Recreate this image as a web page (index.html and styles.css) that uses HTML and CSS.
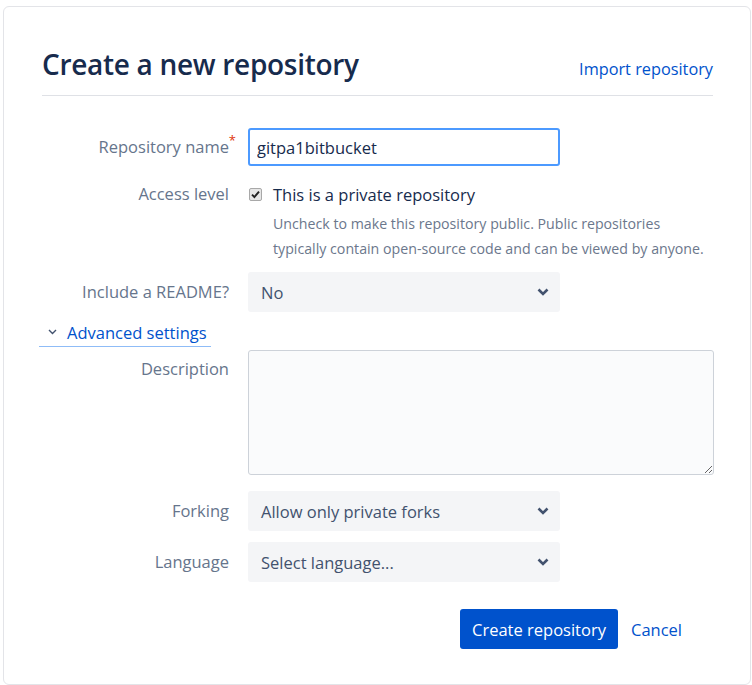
FILE: index.html
```html
<!DOCTYPE html>
<html>
<head>
<meta charset="utf-8">
<link rel="stylesheet" href="styles.css">
</head>
<body>
<div class="card">
  <div class="head">
    <h1 class="title">Create a new repository</h1>
    <a class="link import" href="#">Import repository</a>
  </div>
  <form class="form">
    <div class="row row-name">
      <label class="lbl"><span class="lbl-text">Repository name<span class="req">*</span></span></label>
      <div class="field"><input class="text" type="text" value="gitpa1bitbucket"></div>
    </div>
    <div class="row row-access">
      <label class="lbl">Access level</label>
      <div class="field">
        <div class="check-line">
          <span class="checkbox"><svg width="9" height="9" viewBox="0 0 9 9"><path d="M1 4.6 L3.4 7 L8 1.6" fill="none" stroke="#222" stroke-width="1.9"/></svg></span>
          <span class="check-text">This is a private repository</span>
        </div>
        <p class="help">Uncheck to make this repository public. Public repositories<br>typically contain open-source code and can be viewed by anyone.</p>
      </div>
    </div>
    <div class="row row-readme">
      <label class="lbl">Include a README?</label>
      <div class="field"><div class="select"><span>No</span><svg class="chev" width="12" height="8" viewBox="0 0 12 8"><path d="M1.5 1.5 L6 6 L10.5 1.5" fill="none" stroke="#42526e" stroke-width="2.6"/></svg></div></div>
    </div>
    <div class="advanced">
      <a class="link adv-link" href="#"><svg class="adv-chev" width="9" height="6" viewBox="0 0 9 6"><path d="M1 1 L4.5 4.5 L8 1" fill="none" stroke="#42526e" stroke-width="1.4"/></svg>Advanced settings</a>
    </div>
    <div class="row row-desc">
      <label class="lbl">Description</label>
      <div class="field"><textarea class="textarea"></textarea></div>
    </div>
    <div class="row row-fork">
      <label class="lbl">Forking</label>
      <div class="field"><div class="select"><span>Allow only private forks</span><svg class="chev" width="12" height="8" viewBox="0 0 12 8"><path d="M1.5 1.5 L6 6 L10.5 1.5" fill="none" stroke="#42526e" stroke-width="2.6"/></svg></div></div>
    </div>
    <div class="row row-lang">
      <label class="lbl">Language</label>
      <div class="field"><div class="select"><span>Select language...</span><svg class="chev" width="12" height="8" viewBox="0 0 12 8"><path d="M1.5 1.5 L6 6 L10.5 1.5" fill="none" stroke="#42526e" stroke-width="2.6"/></svg></div></div>
    </div>
    <div class="actions">
      <button class="btn" type="button">Create repository</button>
      <a class="link cancel" href="#">Cancel</a>
    </div>
  </form>
</div>
</body>
</html>
```
FILE: styles.css
```css
* { box-sizing: border-box; }
html, body { margin: 0; padding: 0; background: #fff; }
body {
  font-family: "Open Sans", "Noto Sans", sans-serif;
  color: #172b4d;
  font-size: 16.5px;
}
.card {
  margin: 6px 1px 0 3px;
  height: 679px;
  border: 1px solid #e3e4e8;
  border-radius: 6px;
  padding: 0 37px 0 38px;
}
.head {
  display: flex;
  justify-content: space-between;
  align-items: baseline;
  padding-top: 39px;
  padding-bottom: 13px;
  border-bottom: 1px solid #dfe1e6;
}
.title {
  margin: 0;
  font-size: 28px;
  font-weight: 600;
  line-height: 36px;
  color: #172b4d;
  letter-spacing: -0.3px;
}
.link { color: #0052cc; text-decoration: none; }
.import { font-size: 16.3px; }
.form { padding-top: 32px; }
.row {
  display: grid;
  grid-template-columns: 187px 312px;
  column-gap: 19px;
}
.lbl {
  text-align: right;
  color: #66758c;
  font-size: 16.5px;
}
.lbl-text { position: relative; }
.row-name .lbl { padding-top: 7px; }
.req {
  position: absolute;
  right: -7px;
  top: -1px;
  color: #de350b;
  font-size: 13px;
  line-height: 1;
}
.text {
  width: 312px;
  height: 38px;
  border: 2px solid #4c9aff;
  border-radius: 3px;
  padding: 0 7px;
  font: inherit;
  color: #172b4d;
  outline: none;
}
.row-access { margin-top: 16px; }
.check-line { display: flex; align-items: center; height: 24px; }
.checkbox {
  width: 13px; height: 13px;
  margin-left: 1px;
  border: 1px solid #a8a8a8;
  border-radius: 2px;
  background: #e6e6e6;
  display: flex; align-items: center; justify-content: center;
}
.check-text { margin-left: 11px; color: #172b4d; }
.help {
  margin: 5px 0 0 25px;
  width: 450px;
  font-size: 14.2px;
  line-height: 25px;
  color: #6b778c;
}
.row-access .lbl { line-height: 24px; }
.row-readme { margin-top: 11px; }
.select {
  width: 312px;
  height: 40px;
  background: #f4f5f7;
  border-radius: 3px;
  display: flex;
  align-items: center;
  justify-content: space-between;
  padding: 0 11px 0 13px;
  color: #42526e;
}
.row-readme .lbl, .row-fork .lbl, .row-lang .lbl { line-height: 40px; }
.advanced { margin: 5px 0 0 -3px; }
.adv-link {
  display: inline-flex;
  align-items: center;
  width: 172px;
  height: 29px;
  border-bottom: 1px solid #8fbcf7;
  padding-left: 9px;
}
.adv-chev { margin-right: 10px; }
.row-desc { margin-top: 3px; grid-template-columns: 187px 466px; }
.row-desc .lbl { padding-top: 7px; }
.textarea {
  width: 466px;
  height: 125px;
  border: 1px solid #cdd2d9;
  border-radius: 3px;
  background: #fafbfc;
  display: block;
  font: inherit;
}
.row-fork { margin-top: 16px; }
.row-lang { margin-top: 11px; }
.actions {
  margin-top: 27px;
  display: flex;
  align-items: center;
  padding-left: 418px;
}
.btn {
  width: 158px;
  height: 40px;
  background: #0052cc;
  color: #fff;
  border: none;
  border-radius: 3px;
  font: inherit;
  padding: 0;
}
.cancel { margin-left: 13px; }
```
